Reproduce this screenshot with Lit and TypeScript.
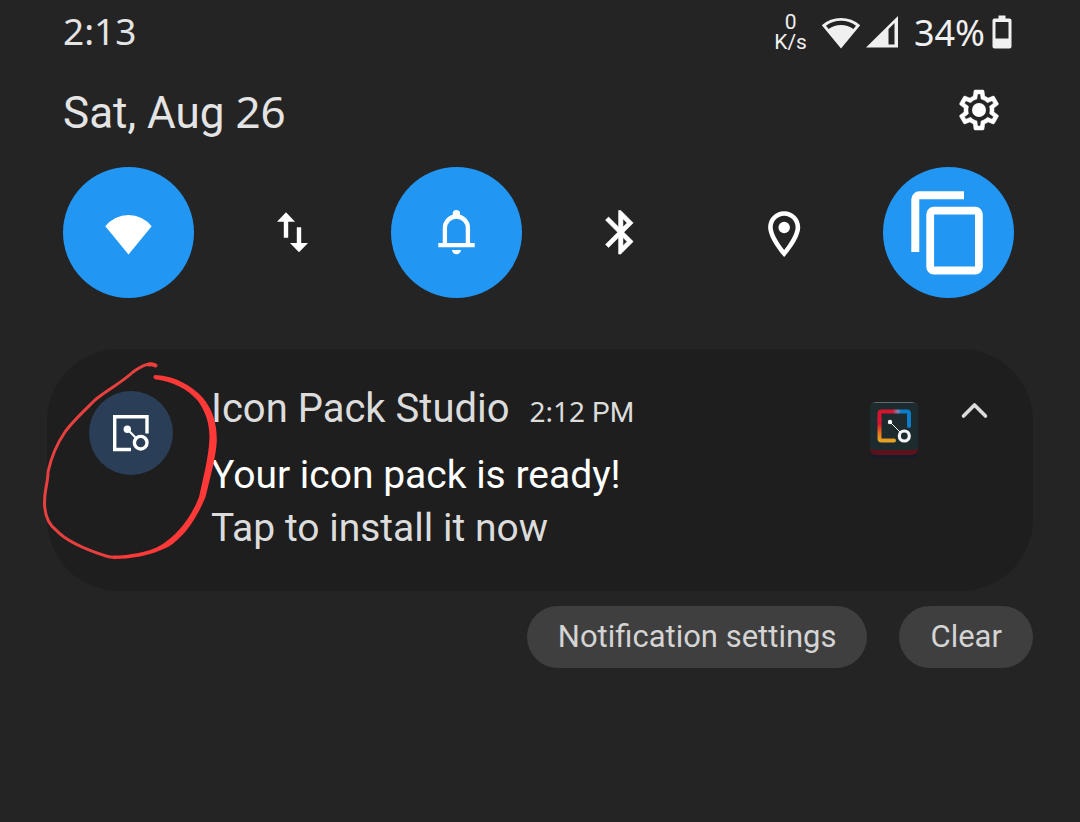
import { LitElement, html, css, svg } from "lit";
import { customElement, property, state } from "lit/decorators.js";
import { classMap } from "lit/directives/class-map.js";

const tileIcons: Record<string, unknown> = {
  wifi: svg`<path d="M65.5 87.5 42.3 59.3a29.5 29.5 0 0 1 46.4 0z"/>`,
  data: svg`<path d="M59 45.3 68 54.7H61.2V70.7H56.8V54.7H50zM72 85.3 63 76H69.8V60.3H74.2V76H81z"/>`,
  bell: svg`<circle cx="65.4" cy="46.7" r="3.7"/>
    <path d="M53.9 78V61a11.5 11.5 0 0 1 23 0v17" fill="none" stroke="currentColor" stroke-width="4.3"/>
    <path d="M47.3 76h36.4v4.3H47.3zM61 83h9a4.5 4.2 0 0 1-9 0z"/>`,
  bluetooth: svg`<path transform="translate(39.6 39.1) scale(2.18)" stroke="currentColor" stroke-width=".25" d="M17.71 7.71L12 2h-1v7.59L6.41 5 5 6.41 10.59 12 5 17.59 6.41 19 11 14.41V22h1l5.71-5.71-4.3-4.29 4.3-4.29zM13 5.83l1.88 1.88L13 9.59V5.83zm1.88 10.46L13 18.17v-3.76l1.88 1.88z"/>`,
  location: svg`<g transform="translate(37.7 39.7) scale(2.29)"><path d="M12 2C8.13 2 5 5.13 5 9c0 5.25 7 13 7 13s7-7.75 7-13c0-3.87-3.13-7-7-7zM7 9c0-2.76 2.24-5 5-5s5 2.24 5 5c0 2.88-2.88 7.19-5 9.88C9.92 16.21 7 11.85 7 9z"/><circle cx="12" cy="9.1" r="2.5"/></g>`,
  copy: svg`<path d="M28.3 85V32.3a8 8 0 0 1 8-8H81v8H36.3V85z"/>
    <rect x="47.2" y="43.6" width="48.7" height="59.9" rx="3.6" fill="none" stroke="currentColor" stroke-width="7.8"/>`,
};

@customElement("quick-tile")
class QuickTile extends LitElement {
  @property() icon = "";
  @property() label = "";
  @property({ type: Boolean }) on = false;

  static styles = css`
    :host { display: block; }
    .tile {
      display: block; width: 131px; height: 131px; padding: 0; border: 0;
      border-radius: 50%; background: none; color: #fff; cursor: pointer;
    }
    .tile.on { background: #2296f3; }
    .tile svg { display: block; width: 100%; height: 100%; fill: currentColor; }
  `;

  render() {
    return html`<button class=${classMap({ tile: true, on: this.on })} aria-label=${this.label}
      aria-pressed=${this.on ? "true" : "false"} @click=${() => (this.on = !this.on)}>
      <svg viewBox="0 0 131 131" aria-hidden="true">${tileIcons[this.icon]}</svg>
    </button>`;
  }
}

@customElement("app-root")
class AppRoot extends LitElement {
  @state() private tiles = [
    { icon: "wifi", label: "Wi-Fi", on: true },
    { icon: "data", label: "Mobile data", on: false },
    { icon: "bell", label: "Sound", on: true },
    { icon: "bluetooth", label: "Bluetooth", on: false },
    { icon: "location", label: "Location", on: false },
    { icon: "copy", label: "Copy", on: true },
  ];

  static styles = css`
    :host {
      display: block; min-height: 100vh; box-sizing: border-box;
      background: #242424; color: #e4e4e4;
      font-family: Roboto, "Noto Sans", sans-serif;
    }
    * { box-sizing: border-box; }
    svg { display: block; flex: none; }
    button { font-family: inherit; border: 0; margin: 0; cursor: pointer; }
    h1, h2, p { margin: 0; font-weight: 400; }
    .digits { font-family: "Noto Sans", sans-serif; }

    .status { display: flex; align-items: center; justify-content: space-between; height: 64px; padding: 0 68px 0 63px; }
    .clock { font-size: 37px; line-height: 64px; padding-bottom: 2px; }
    .indicators { display: flex; align-items: center; color: #f0f0f0; }
    .speed { display: flex; flex-direction: column; align-items: center; margin-right: 14px; font-size: 21px; line-height: 21px; }
    .speed span { height: 20px; overflow: visible; }
    .signal { margin-left: 4px; }
    .percent { margin: 0 7px 0 16px; padding-top: 2px; font-size: 36px; line-height: 64px; }

    .heading { display: flex; align-items: center; justify-content: space-between; height: 92px; padding: 0 77px 0 63px; }
    .date { padding-top: 3px; font-size: 44px; line-height: 92px; }
    .gear { padding: 0; background: none; color: #fff; }

    .tiles { display: flex; justify-content: space-between; padding: 11px 66px 0 63px; }

    .shade { padding: 51px 47px 0; }
    .card {
      position: relative; display: flex; align-items: flex-start;
      padding: 32px 42px 36px; border-radius: 72px; background: #1e1e1e; color: #dcdcdc;
    }
    .badge { margin: 10px 38px 0 0; }
    .text { flex: 1; min-width: 0; }
    .title { display: flex; align-items: baseline; gap: 20px; line-height: 56px; margin-bottom: 8px; }
    .app { font-size: 40px; }
    .time { font-size: 28px; }
    .line { font-size: 39px; line-height: 53px; }
    .strong { color: #fff; }
    .large { margin-top: 20px; }
    .collapse { padding: 0; margin: 20px 1px 0 39px; background: none; color: #dcdcdc; }
    .mark { position: absolute; left: -8px; top: 8px; pointer-events: none; }

    .actions { display: flex; justify-content: flex-end; gap: 32px; margin-top: 15px; }
    .pill { height: 62px; padding: 0 31px; border-radius: 31px; background: #3f3f3f; color: #d4d4d4; font-size: 31px; line-height: 62px; }
  `;

  render() {
    return html`
      <header class="status">
        <span class="clock digits">2:13</span>
        <div class="indicators">
          <div class="speed"><span>0</span><span>K/s</span></div>
          <svg width="40" height="34" viewBox="0 0 40 34" fill="currentColor" aria-hidden="true">
            <path fill-rule="evenodd" d="M20 33.5.8 10.2a29 29 0 0 1 38.4 0zM5 10.8l2.600 3.200a21 21 0 0 1 24.800 0l2.600-3.200a25 25 0 0 0-30 0z"/>
          </svg>
          <svg class="signal" width="33" height="34" viewBox="0 0 33 34" fill="currentColor" aria-hidden="true">
            <path fill-rule="evenodd" d="M33 1v31.5H1zM29.500 8l-6 6V29.500h6z"/>
          </svg>
          <span class="percent digits">34%</span>
          <svg width="20" height="34" viewBox="0 0 20 34" fill="currentColor" aria-hidden="true">
            <path fill-rule="evenodd" d="M6.500.500h7v3H17.500a2 2 0 0 1 2 2v26a2 2 0 0 1-2 2h-15a2 2 0 0 1-2-2v-26a2 2 0 0 1 2-2h4zM3.500 7v16.500h13V7z"/>
          </svg>
        </div>
      </header>

      <div class="heading">
        <h1 class="date">Sat, Aug <span class="digits">26</span></h1>
        <button class="gear" aria-label="Settings">
          <svg width="48" height="48" viewBox="0 0 24 24" fill="currentColor" aria-hidden="true">
            <path stroke="currentColor" stroke-width=".25" d="M19.43 12.98c.04-.32.07-.64.07-.98 0-.34-.03-.66-.07-.98l2.11-1.65c.19-.15.24-.42.12-.64l-2-3.46c-.09-.16-.26-.25-.44-.25-.06 0-.12.01-.17.03l-2.49 1c-.52-.4-1.08-.73-1.69-.98l-.38-2.65C14.46 2.18 14.25 2 14 2h-4c-.25 0-.46.18-.49.42l-.38 2.65c-.61.25-1.17.59-1.69.98l-2.49-1c-.06-.02-.12-.03-.18-.03-.17 0-.34.09-.43.25l-2 3.46c-.13.22-.07.49.12.64l2.11 1.65c-.04.32-.07.65-.07.98 0 .33.03.66.07.98l-2.11 1.65c-.19.15-.24.42-.12.64l2 3.46c.09.16.26.25.44.25.06 0 .12-.01.17-.03l2.49-1c.52.4 1.08.73 1.69.98l.38 2.65c.03.24.24.42.49.42h4c.25 0 .46-.18.49-.42l.38-2.65c.61-.25 1.17-.59 1.69-.98l2.49 1c.06.02.12.03.18.03.17 0 .34-.09.43-.25l2-3.46c.12-.22.07-.49-.12-.64l-2.11-1.65zm-1.98-1.71c.04.31.05.52.05.73 0 .21-.02.43-.05.73l-.14 1.13.89.7 1.08.84-.7 1.21-1.27-.51-1.04-.42-.9.68c-.43.32-.84.56-1.25.73l-1.06.43-.16 1.13-.2 1.35h-1.4l-.19-1.35-.16-1.13-1.06-.43c-.43-.18-.83-.41-1.23-.71l-.91-.7-1.06.43-1.27.51-.7-1.21 1.08-.84.89-.7-.14-1.13c-.03-.31-.05-.54-.05-.74s.02-.43.05-.73l.14-1.13-.89-.7-1.08-.84.7-1.21 1.27.51 1.04.42.9-.68c.43-.32.84-.56 1.25-.73l1.06-.43.16-1.13.2-1.35h1.39l.19 1.35.16 1.13 1.06.43c.43.18.83.41 1.23.71l.91.7 1.06-.43 1.27-.51.7 1.21-1.07.85-.89.7.14 1.13z"/>
            <circle cx="12" cy="12" r="3.500"/>
          </svg>
        </button>
      </div>

      <nav class="tiles" aria-label="Quick settings">
        ${this.tiles.map((t) => html`<quick-tile .icon=${t.icon} .label=${t.label} .on=${t.on}></quick-tile>`)}
      </nav>

      <main class="shade">
        <article class="card">
          <svg class="badge" width="84" height="84" viewBox="0 0 84 84" fill="none" stroke="#fff" aria-hidden="true">
            <circle cx="42" cy="42" r="42" fill="#2a3f57" stroke="none"/>
            <path d="M58 42.500V25.700H25.700V58.500H42" stroke-width="3.400"/>
            <path d="M38.300 38.300 47 47" stroke-width="2"/>
            <circle cx="38.300" cy="38.300" r="3.700" fill="#fff" stroke="none"/>
            <circle cx="51.700" cy="51.700" r="6.300" stroke-width="3.400"/>
          </svg>
          <div class="text">
            <div class="title">
              <h2 class="app">Icon Pack Studio</h2>
              <span class="time"><span class="digits">2:12</span> PM</span>
            </div>
            <p class="line strong">Your icon pack is ready!</p>
            <p class="line">Tap to install it now</p>
          </div>
          <svg class="large" width="50" height="58" viewBox="0 0 50 58" fill="none" aria-hidden="true">
            <defs>
              <linearGradient id="top" x1="9" y1="0" x2="41" y2="0" gradientUnits="userSpaceOnUse">
                <stop offset=".45" stop-color="#d3152f"/><stop offset=".62" stop-color="#7d86b0"/><stop offset=".72" stop-color="#0d7cc9"/>
              </linearGradient>
              <linearGradient id="side" x1="0" y1="9" x2="0" y2="40" gradientUnits="userSpaceOnUse">
                <stop offset=".45" stop-color="#d3152f"/><stop offset=".75" stop-color="#e8761c"/><stop offset="1" stop-color="#e5a523"/>
              </linearGradient>
            </defs>
            <rect x="1" y="8" width="48" height="49" rx="6" fill="#151c29"/>
            <rect x="1" y="6" width="48" height="48" rx="6" fill="#5c121b"/>
            <rect x="1" y="1" width="48" height="48" rx="6" fill="#5d6b6d"/>
            <rect x="1" y="2" width="48" height="47" rx="4" fill="#1d2b2f"/>
            <path d="M10.500 20V12.500a2 2 0 0 1 2-2H38a2 2 0 0 1 2 2V25" stroke="url(#top)" stroke-width="4" stroke-linecap="round"/>
            <path d="M10.500 18V37.500a2 2 0 0 0 2 2H25" stroke="url(#side)" stroke-width="4" stroke-linecap="round"/>
            <path d="M21 21 31 31" stroke="#fff" stroke-width="1"/>
            <circle cx="21" cy="21" r="2.200" fill="#fff"/>
            <circle cx="35.300" cy="35" r="5" stroke="#f2f5fa" stroke-width="3.200"/>
          </svg>
          <button class="collapse" aria-label="Collapse">
            <svg width="32" height="20" viewBox="0 0 32 20" fill="none" stroke="currentColor" stroke-width="3.600" stroke-linecap="round" stroke-linejoin="round" aria-hidden="true">
              <path d="M5.500 15 16.500 4 27.500 15"/>
            </svg>
          </button>
          <svg class="mark" width="180" height="208" viewBox="39 357 180 208" aria-hidden="true">
            <path d="M155.500 365.500C147 362 140 367 133 372C120 384 108 389 95 400C84 411 72 422 65 432C56 445 51 458 48 472C48 484 44 490 44.500 504C45 516 48 524 56 530C66 541 84 549 106 556C109 557 112 557.500 116 557.300" fill="none" stroke="#e8403f" stroke-width="3" stroke-linecap="round"/>
            <path d="M149 364.500Q152 363.500 155.500 365.500" fill="none" stroke="#f03c3c" stroke-width="4" stroke-linecap="round"/>
            <path d="M155 375C176 376 192 386 203 398C213 410 217 424 216.800 441C216 456 211 475 205.500 497C196 520 184 537 168 547C150 556 130 559 113 559V555.800C130 555 148 553 162 544.500C177 535 191 518 199 497C204 475 208.500 456 209.300 441C210.500 424 205 411 198 401C187 388 172 381.500 155 379.200A2.200 2.200 0 0 1 155 375z" fill="#ff3838"/>
          </svg>
        </article>

        <div class="actions">
          <button class="pill">Notification settings</button>
          <button class="pill">Clear</button>
        </div>
      </main>
    `;
  }
}
